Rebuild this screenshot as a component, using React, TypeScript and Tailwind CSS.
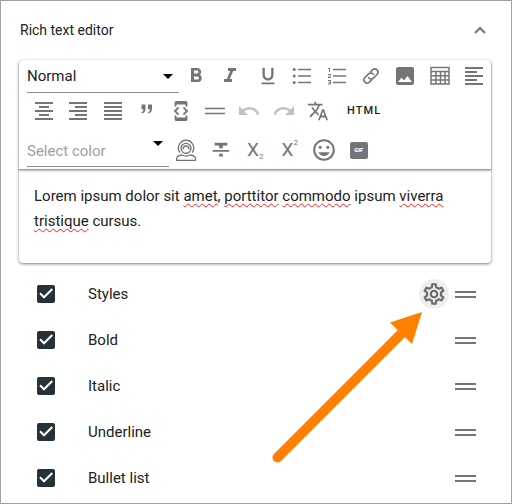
import React, { useState } from "react";
import {
  MdDeveloperMode,
  MdFormatAlignCenter,
  MdFormatAlignJustify,
  MdFormatAlignLeft,
  MdFormatAlignRight,
  MdFormatBold,
  MdFormatItalic,
  MdFormatStrikethrough,
  MdFormatUnderlined,
  MdImage,
  MdOutlineInsertEmoticon,
  MdOutlineSettings,
  MdRedo,
  MdTranslate,
  MdUndo,
} from "react-icons/md";

function Svg({ children, className = "size-6" }: { children: React.ReactNode; className?: string }) {
  return (
    <svg viewBox="0 0 24 24" className={className} fill="none" stroke="currentColor" strokeWidth="1.5" aria-hidden="true">
      {children}
    </svg>
  );
}

const BulletList = () => (
  <Svg>
    <path d="M8 5.5h13M8 12h13M8 18.5h13" />
    <g fill="currentColor" stroke="none">
      <circle cx="4.2" cy="5.5" r="1.5" />
      <circle cx="4.2" cy="12" r="1.5" />
      <circle cx="4.2" cy="18.5" r="1.5" />
    </g>
  </Svg>
);

const NumberList = () => (
  <Svg>
    <path d="M8 5.5h13M8 12h13M8 18.5h13" />
    <path strokeWidth="1" d="M3 4.5h1.5v3.5M3 10.5h2.5v1.5l-2.5 1.5h2.7M3 16.5h2.5v3.5H3M3.7 18.3h1.8" />
  </Svg>
);

const LinkIcon = () => (
  <Svg>
    <g transform="rotate(-45 12 12)" strokeWidth="1.6">
      <path d="M10 15.2H6.6a3.2 3.2 0 0 1 0-6.4h5.2a3.2 3.2 0 0 1 3 4.3" />
      <path d="M14 8.8h3.4a3.2 3.2 0 0 1 0 6.4h-5.2a3.2 3.2 0 0 1-3-4.3" />
    </g>
  </Svg>
);

const TableIcon = () => (
  <Svg>
    <path strokeWidth="1.5" d="M3 3.5h18v16.5H3zM3 7.5h18M3 11.7h18M3 15.9h18M8 7.5V20M12.5 7.5V20M17 7.5V20" />
  </Svg>
);

const QuoteIcon = () => (
  <Svg>
    <g fill="currentColor" stroke="none">
      <path d="M6.5 5.5h4v4.2c0 2.4-1.1 4-3.2 4.8l-.8-1c1.3-.7 1.9-1.7 1.9-3.2H6.5z" />
      <path d="M13 5.5h4v4.2c0 2.4-1.1 4-3.2 4.8l-.8-1c1.3-.7 1.9-1.7 1.9-3.2H13z" />
    </g>
  </Svg>
);

const RuleIcon = () => (
  <Svg>
    <path d="M2 9.500h20M2 14.500h20" />
  </Svg>
);

const AgentIcon = () => (
  <Svg>
    <g strokeWidth="1.3">
      <path d="M6 14.5C4.200 12.500 4 9 5.500 6.200a7.500 7.500 0 0 1 13.200 0c1.500 2.800 1.300 6-.5 8.300" />
      <circle cx="12" cy="10.300" r="5" />
      <path d="M9 11.500c-.2-2 1-3.500 3-3.500s3.200 1.500 3 3.500M11 15.300h2.500" />
      <path d="M2.600 22.300c-.4-3.300 1.500-5 5.400-5.300 2.500 1.300 5.700 1.300 8.200 0 3.900.3 5.800 2 5.400 5.300z" />
    </g>
  </Svg>
);

const GifIcon = () => (
  <span className="flex h-[17px] w-[18px] items-center justify-center rounded-xs bg-[#757575] text-[6px] leading-none font-black text-white">
    GIF
  </span>
);

const Sub = () => (
  <span className="flex items-end text-[19px] leading-5">
    X<span className="text-[8px] leading-[6px]">2</span>
  </span>
);

const Sup = () => (
  <span className="flex items-start text-[19px] leading-5">
    X<span className="text-[8px] leading-[6px]">2</span>
  </span>
);

function Tool({ label, children, disabled }: { label: string; children: React.ReactNode; disabled?: boolean }) {
  return (
    <button
      type="button"
      aria-label={label}
      disabled={disabled}
      className="flex h-8 items-center justify-center text-[#757575] disabled:text-[#c2c2c2]"
    >
      {children}
    </button>
  );
}

function Caret() {
  return (
    <svg viewBox="0 0 10 5" className="pointer-events-none -ml-4 h-[5px] w-[10px] shrink-0" aria-hidden="true">
      <path d="M0 0h10L5 5z" />
    </svg>
  );
}

function OptionRow({ name, settings }: { name: string; settings?: boolean }) {
  const [on, setOn] = useState(true);
  return (
    <li className="flex h-[46px] items-center pr-[15px] pl-[18px]">
      <label className="flex flex-1 items-center gap-[33px] text-[15px] leading-5">
        <span className="grid size-[18px]">
          <input
            type="checkbox"
            checked={on}
            onChange={() => setOn(!on)}
            className="peer col-start-1 row-start-1 size-[18px] appearance-none rounded-xs border-2 border-[#263238] checked:bg-[#263238]"
          />
          <svg
            viewBox="0 0 18 18"
            className="pointer-events-none invisible col-start-1 row-start-1 peer-checked:visible"
            fill="none"
            stroke="white"
            strokeWidth="2"
            aria-hidden="true"
          >
            <path d="M3 8.3l4 4 8.300-8.300" />
          </svg>
        </span>
        {name}
      </label>
      {settings && (
        <button
          type="button"
          aria-label={`${name} settings`}
          className="mr-[6px] flex size-[30px] items-center justify-center rounded-full bg-[#eeeeee] text-[#6b6b6b]"
        >
          <MdOutlineSettings className="size-[26px]" />
        </button>
      )}
      <button type="button" aria-label={`Move ${name}`} className="flex w-[21px] flex-col gap-[3px]">
        <span className="h-[2px] bg-[#757575]" />
        <span className="h-[2px] bg-[#757575]" />
      </button>
    </li>
  );
}

const wavy = "underline decoration-[#ff1a1a] decoration-wavy decoration-[1px] underline-offset-2 [text-decoration-skip-ink:none]";

export default function App() {
  return (
    <main className="relative min-h-screen border border-[#a0a0a0] bg-white pr-5 pl-[18px] font-[Roboto,sans-serif] text-[#212121]">
      <header className="flex h-[59px] items-center justify-between pr-[3px] pb-[2px] pl-px">
        <h1 className="text-sm leading-5">Rich text editor</h1>
        <button type="button" aria-label="Collapse" className="text-[#757575]">
          <svg viewBox="0 0 16 16" className="size-4" fill="none" stroke="currentColor" strokeWidth="2" aria-hidden="true">
            <path d="M3 11l5-5 5 5" />
          </svg>
        </button>
      </header>

      <section className="rounded-sm shadow-[0_1px_3px_rgba(0,0,0,0.5)]">
        <div className="h-[110px] rounded-t-sm border-b border-[#9e9e9e] pl-2 shadow-[0_1px_2px_rgba(0,0,0,0.3)]">
          <div className="flex">
            <div className="flex h-[33px] w-[152px] items-center border-b border-[#8c8c8c]">
              <select aria-label="Style" className="w-full appearance-none text-[15px] leading-5">
                <option>Normal</option>
              </select>
              <Caret />
            </div>
            <div className="grid w-[68px] grid-cols-2">
              <Tool label="Bold"><MdFormatBold className="size-6" /></Tool>
              <Tool label="Italic"><MdFormatItalic className="size-6" /></Tool>
            </div>
            <div className="ml-auto grid w-[240px] grid-cols-7">
              <Tool label="Underline"><MdFormatUnderlined className="size-[22px]" /></Tool>
              <Tool label="Bullet list"><BulletList /></Tool>
              <Tool label="Numbered list"><NumberList /></Tool>
              <Tool label="Link"><LinkIcon /></Tool>
              <Tool label="Image"><MdImage className="size-6" /></Tool>
              <Tool label="Table"><TableIcon /></Tool>
              <Tool label="Align left"><MdFormatAlignLeft className="size-6" /></Tool>
            </div>
          </div>
          <div className="flex h-9 items-center">
            <div className="grid w-[308px] grid-cols-9">
              <Tool label="Align center"><MdFormatAlignCenter className="size-6" /></Tool>
              <Tool label="Align right"><MdFormatAlignRight className="size-6" /></Tool>
              <Tool label="Justify"><MdFormatAlignJustify className="size-6" /></Tool>
              <Tool label="Quote"><QuoteIcon /></Tool>
              <Tool label="Code"><MdDeveloperMode className="size-[22px]" /></Tool>
              <Tool label="Divider"><RuleIcon /></Tool>
              <Tool label="Undo" disabled><MdUndo className="size-6" /></Tool>
              <Tool label="Redo" disabled><MdRedo className="size-6" /></Tool>
              <Tool label="Translate"><MdTranslate className="size-[22px]" /></Tool>
            </div>
            <button type="button" className="px-3 text-[11px] leading-4 font-medium tracking-widest text-[#212121]">HTML</button>
          </div>
          <div className="flex">
            <div className="flex h-[38px] w-[142px] items-start border-b border-[#8c8c8c] pt-3">
              <select aria-label="Color" className="w-full appearance-none text-[15px] leading-5 text-[#9e9e9e]">
                <option>Select color</option>
              </select>
              <Caret />
            </div>
            <div className="grid w-[207px] grid-cols-6 pt-[5px]">
              <Tool label="Personalize"><AgentIcon /></Tool>
              <Tool label="Strikethrough"><MdFormatStrikethrough className="size-[22px]" /></Tool>
              <Tool label="Subscript"><Sub /></Tool>
              <Tool label="Superscript"><Sup /></Tool>
              <Tool label="Emoji"><MdOutlineInsertEmoticon className="size-[26px]" /></Tool>
              <Tool label="GIF"><GifIcon /></Tool>
            </div>
          </div>
        </div>
        <div
          role="textbox"
          aria-label="Content"
          contentEditable
          suppressContentEditableWarning
          spellCheck={false}
          className="h-[93px] px-[15px] pt-[14px] text-[15px] leading-[25px] outline-none"
        >
          Lorem ipsum dolor sit <span className={wavy}>amet</span>, <span className={wavy}>porttitor</span>{" "}
          <span className={wavy}>commodo</span> ipsum <span className={wavy}>viverra</span>{" "}
          <span className={wavy}>tristique</span> cursus.
        </div>
      </section>

      <ul className="pt-2">
        <OptionRow name="Styles" settings />
        <OptionRow name="Bold" />
        <OptionRow name="Italic" />
        <OptionRow name="Underline" />
        <OptionRow name="Bullet list" />
      </ul>

      <svg
        viewBox="0 0 152 152"
        className="pointer-events-none absolute top-[311px] right-[88px] size-[152px]"
        aria-hidden="true"
      >
        <path d="M6.5 145.500L130 22" stroke="#ff8000" strokeWidth="10" strokeLinecap="round" />
        <path d="M151 0L119 10.500 141 32z" fill="#ff8000" />
      </svg>
    </main>
  );
}
